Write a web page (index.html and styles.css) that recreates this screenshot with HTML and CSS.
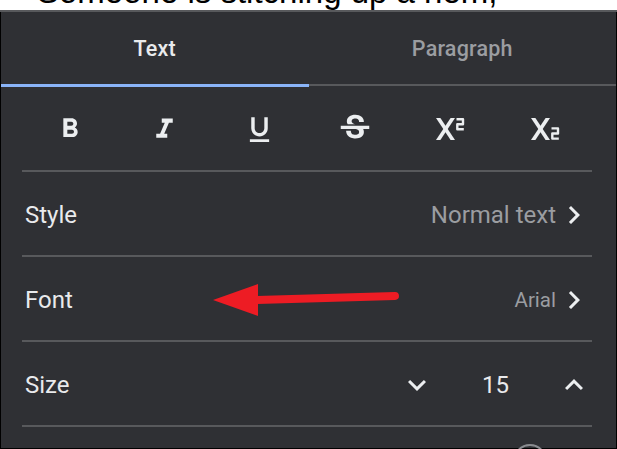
FILE: index.html
```html
<!DOCTYPE html>
<html>
<head>
<meta charset="utf-8">
<link rel="stylesheet" href="styles.css">
</head>
<body>
<div class="screen">
  <div class="doc"><div class="doc-text">Someone is stitching up a hem,</div></div>
  <div class="panel">
    <div class="tabs">
      <div class="tab active">Text</div>
      <div class="tab">Paragraph</div>
    </div>
    <div class="tab-bar"><div class="bar-active"></div><div class="bar-rest"></div></div>
    <div class="tools">
      <div class="tool"><svg class="ic-b" viewBox="0 0 24 24"><path d="M15.6 10.79c.97-.67 1.65-1.770 1.65-2.79 0-2.26-1.75-4-4-4H7v14h7.04c2.09 0 3.71-1.7 3.71-3.79 0-1.52-.86-2.82-2.15-3.42zM10 6.5h3c.83 0 1.5.67 1.5 1.5s-.67 1.5-1.5 1.5h-3v-3zm3.5 9H10v-3h3.5c.83 0 1.5.67 1.5 1.5s-.67 1.5-1.5 1.5z"/></svg></div>
      <div class="tool"><svg class="ic-i" viewBox="0 0 24 24"><path d="M10 4v3h2.21l-3.42 8H6v3h8v-3h-2.21l3.42-8H18V4z"/></svg></div>
      <div class="tool"><svg class="ic-u" viewBox="0 0 24 24"><path d="M12 17c3.31 0 6-2.69 6-6V3h-2.5v8c0 1.93-1.57 3.5-3.5 3.5S8.5 12.93 8.5 11V3H6v8c0 3.310 2.69 6 6 6zm-7 2v2h14v-2H5z"/></svg></div>
      <div class="tool"><svg class="ic-s" viewBox="0 0 24 24"><path d="M7.24 8.75c-.26-.48-.39-1.030-.39-1.67 0-.61.13-1.16.4-1.67.26-.5.63-.93 1.11-1.29.48-.35 1.05-.63 1.7-.83.66-.19 1.39-.29 2.18-.29.81 0 1.54.11 2.210.34.66.22 1.23.54 1.69.94.47.4.83.88 1.08 1.43.25.55.38 1.15.38 1.81h-3.01c0-.31-.05-.59-.15-.85-.09-.27-.24-.49-.44-.68-.2-.19-.45-.33-.75-.44-.3-.1-.66-.16-1.06-.16-.39 0-.74.04-1.03.13-.29.09-.53.21-.72.36-.19.16-.34.34-.44.55-.1.21-.15.43-.15.66 0 .48.25.88.74 1.21.38.25.77.48 1.41.7H7.39c-.05-.08-.11-.17-.15-.25zM21 12v-2H3v2h9.62c.18.07.4.14.55.2.37.17.66.34.87.51.21.17.35.36.43.57.07.2.11.43.11.69 0 .23-.05.45-.14.66-.09.2-.23.38-.42.53-.19.15-.42.26-.71.35-.29.08-.63.13-1.01.13-.43 0-.83-.04-1.18-.13s-.66-.23-.91-.42c-.25-.19-.45-.44-.59-.75-.14-.31-.25-.76-.25-1.21H6.4c0 .55.08 1.13.24 1.58.16.45.37.85.65 1.21.28.35.6.66.98.92.37.26.78.48 1.220.65.44.17.9.3 1.38.39.48.08.96.13 1.44.13.8 0 1.53-.09 2.18-.28s1.21-.45 1.67-.79c.46-.34.82-.77 1.07-1.27s.38-1.07.38-1.71c0-.6-.1-1.14-.31-1.61-.05-.11-.11-.23-.17-.33H21z"/></svg></div>
      <div class="tool"><svg class="ic-x" viewBox="0 0 30 24"><polygon points="1,1 5.4,1 20,23 15.6,23"/><polygon points="15.6,1 20,1 5.4,23 1,23"/><path class="two" d="M21.5 2.2H28V7.3H22.3V12.3H28.8"/></svg></div>
      <div class="tool"><svg class="ic-x" viewBox="0 0 30 24"><polygon points="1,1 5.4,1 20,23 15.6,23"/><polygon points="15.6,1 20,1 5.4,23 1,23"/><path class="two" d="M21.5 11.4H28V16.5H22.3V21.6H28.8"/></svg></div>
    </div>
    <div class="row">
      <span class="label">Style</span>
      <span class="value">Normal text</span>
      <svg class="chev" viewBox="0 0 24 24"><path d="M10 6L8.59 7.410 13.17 12l-4.58 4.59L10 18l6-6z"/></svg>
    </div>
    <div class="row font-row">
      <span class="label">Font</span>
      <span class="value small">Arial</span>
      <svg class="chev" viewBox="0 0 24 24"><path d="M10 6L8.59 7.410 13.17 12l-4.58 4.59L10 18l6-6z"/></svg>
      <svg class="arrow" viewBox="0 0 190 56"><path d="M44 28 L182 24" stroke="#ed1c24" stroke-width="8" stroke-linecap="round"/><polygon points="0,28 45,12 45,44" fill="#ed1c24"/></svg>
    </div>
    <div class="row">
      <span class="label">Size</span>
      <div class="stepper">
        <svg class="chev" viewBox="0 0 24 24"><path d="M16.59 8.59L12 13.17 7.41 8.59 6 10l6 6 6-6z"/></svg>
        <span class="num">15</span>
        <svg class="chev" viewBox="0 0 24 24"><path d="M12 8l-6 6 1.41 1.41L12 10.83l4.59 4.58L18 14z"/></svg>
      </div>
    </div>
    <div class="tail"><div class="knob"></div></div>
  </div>
</div>
</body>
</html>
```

FILE: styles.css
```css
* { box-sizing: border-box; }
html, body { margin: 0; padding: 0; background: #2f3034; }
body { font-family: Roboto, "Noto Sans", sans-serif; }
.screen { width: 617px; height: 449px; overflow: hidden; display: flex; flex-direction: column; }
.doc { height: 12px; background: #fff; overflow: hidden; border-bottom: 2px solid #58595c; flex: none; }
.doc-text { font-family: "Liberation Sans", Arial, sans-serif; font-size: 33px; line-height: 33px; margin-top: -25px; padding-left: 37px; color: #000; white-space: nowrap; }
.panel { flex: 1; background: #2f3034; border-left: 1px solid #000; border-right: 1px solid #000; border-bottom: 1px solid #000; position: relative; display: flex; flex-direction: column; }
.tabs { display: flex; height: 72px; align-items: center; flex: none; }
.tab { flex: 1; text-align: center; font-size: 21.5px; font-weight: 500; color: #9b9da1; letter-spacing: 0.2px; padding-top: 1px; }
.tab.active { color: #e9eaec; }
.tab-bar { display: flex; height: 3px; align-items: flex-start; flex: none; }
.bar-active { flex: 1; height: 3px; background: #8ab4f8; }
.bar-rest { flex: 1; height: 2px; background: #58595c; }
.tools { display: grid; grid-template-columns: repeat(6, 1fr); height: 85px; margin: 0 24px 0 21px; border-bottom: 2px solid #58595c; align-items: center; justify-items: center; flex: none; padding-top: 1px; }
.tool svg { width: 32px; height: 32px; fill: #eceef0; display: block; }
.tool .ic-i { width: 33px; height: 33px; }
.tool .ic-u { width: 33px; height: 33px; }
.tool .ic-s { width: 38px; height: 38px; }
.tool .ic-x { width: 30px; height: 24px; margin-left: 1px; }
.ic-x .two { fill: none; stroke: #eceef0; stroke-width: 2.4; stroke-linejoin: round; }
.row { height: 85px; margin: 0 24px 0 21px; border-bottom: 2px solid #58595c; display: flex; align-items: center; padding-top: 2px; position: relative; flex: none; }
.label { font-size: 24px; color: #e9eaec; flex: 1; padding-left: 3px; }
.value { font-size: 24px; color: #9b9da1; }
.value.small { font-size: 20.5px; }
.chev { width: 36px; height: 36px; fill: #eceef0; display: block; }
.stepper { display: flex; align-items: center; }
.num { font-size: 24px; color: #e9eaec; width: 121px; text-align: center; }
.arrow { position: absolute; left: 191px; top: 15px; width: 190px; height: 56px; overflow: visible; }
.tail { flex: 1; position: relative; }
.knob { position: absolute; left: 512px; top: 17px; width: 34px; height: 34px; border-radius: 50%; border: 2px solid #8a8c90; }
```
